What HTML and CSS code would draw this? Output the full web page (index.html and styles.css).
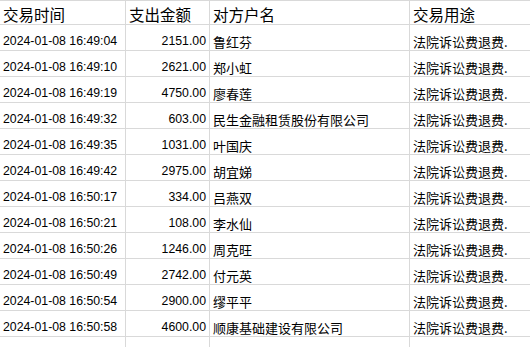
FILE: index.html
```html
<!DOCTYPE html>
<html lang="zh">
<head>
<meta charset="utf-8">
<link rel="stylesheet" href="styles.css">
</head>
<body>
<div class="sheet">
  <div class="cell head">交易时间</div>
  <div class="cell head">支出金额</div>
  <div class="cell head">对方户名</div>
  <div class="cell head">交易用途</div>

  <div class="cell date">2024-01-08 16:49:04</div><div class="cell amt">2151.00</div><div class="cell name">鲁红芬</div><div class="cell use">法院诉讼费退费.</div>
  <div class="cell date">2024-01-08 16:49:10</div><div class="cell amt">2621.00</div><div class="cell name">郑小虹</div><div class="cell use">法院诉讼费退费.</div>
  <div class="cell date">2024-01-08 16:49:19</div><div class="cell amt">4750.00</div><div class="cell name">廖春莲</div><div class="cell use">法院诉讼费退费.</div>
  <div class="cell date">2024-01-08 16:49:32</div><div class="cell amt">603.00</div><div class="cell name">民生金融租赁股份有限公司</div><div class="cell use">法院诉讼费退费.</div>
  <div class="cell date">2024-01-08 16:49:35</div><div class="cell amt">1031.00</div><div class="cell name">叶国庆</div><div class="cell use">法院诉讼费退费.</div>
  <div class="cell date">2024-01-08 16:49:42</div><div class="cell amt">2975.00</div><div class="cell name">胡宜娣</div><div class="cell use">法院诉讼费退费.</div>
  <div class="cell date">2024-01-08 16:50:17</div><div class="cell amt">334.00</div><div class="cell name">吕燕双</div><div class="cell use">法院诉讼费退费.</div>
  <div class="cell date">2024-01-08 16:50:21</div><div class="cell amt">108.00</div><div class="cell name">李水仙</div><div class="cell use">法院诉讼费退费.</div>
  <div class="cell date">2024-01-08 16:50:26</div><div class="cell amt">1246.00</div><div class="cell name">周克旺</div><div class="cell use">法院诉讼费退费.</div>
  <div class="cell date">2024-01-08 16:50:49</div><div class="cell amt">2742.00</div><div class="cell name">付元英</div><div class="cell use">法院诉讼费退费.</div>
  <div class="cell date">2024-01-08 16:50:54</div><div class="cell amt">2900.00</div><div class="cell name">缪平平</div><div class="cell use">法院诉讼费退费.</div>
  <div class="cell date">2024-01-08 16:50:58</div><div class="cell amt">4600.00</div><div class="cell name">顺康基础建设有限公司</div><div class="cell use">法院诉讼费退费.</div>

  <div class="cell"></div><div class="cell"></div><div class="cell"></div><div class="cell"></div>
</div>
</body>
</html>
```
FILE: styles.css
```css
html, body {
  margin: 0;
  padding: 0;
  background: #ffffff;
  overflow: hidden;
}
.sheet {
  width: 530px;
  display: grid;
  grid-template-columns: 125px 83px 199px 120px;
  grid-template-rows: 23px repeat(12, 25px) 20px;
  gap: 1px;
  padding-top: 1px;
  background: #d9d9d9;
  color: #000000;
}
.cell {
  background: #ffffff;
  display: flex;
  align-items: flex-end;
  padding: 0 3px 1px 3px;
  white-space: nowrap;
  overflow: hidden;
  font-family: "Liberation Sans", Arial, sans-serif;
}
.head {
  font-family: "Noto Sans CJK SC", sans-serif;
  font-size: 15.5px;
  line-height: 20px;
  padding-bottom: 0;
}
.date {
  font-size: 12.3px;
  line-height: 14px;
  padding-bottom: 2px;
}
.amt {
  justify-content: flex-end;
  font-size: 12.3px;
  line-height: 14px;
  padding-bottom: 2px;
}
.name, .use {
  font-family: "Noto Sans CJK SC", sans-serif;
  font-size: 13px;
  line-height: 17px;
  padding-bottom: 0;
}
```
